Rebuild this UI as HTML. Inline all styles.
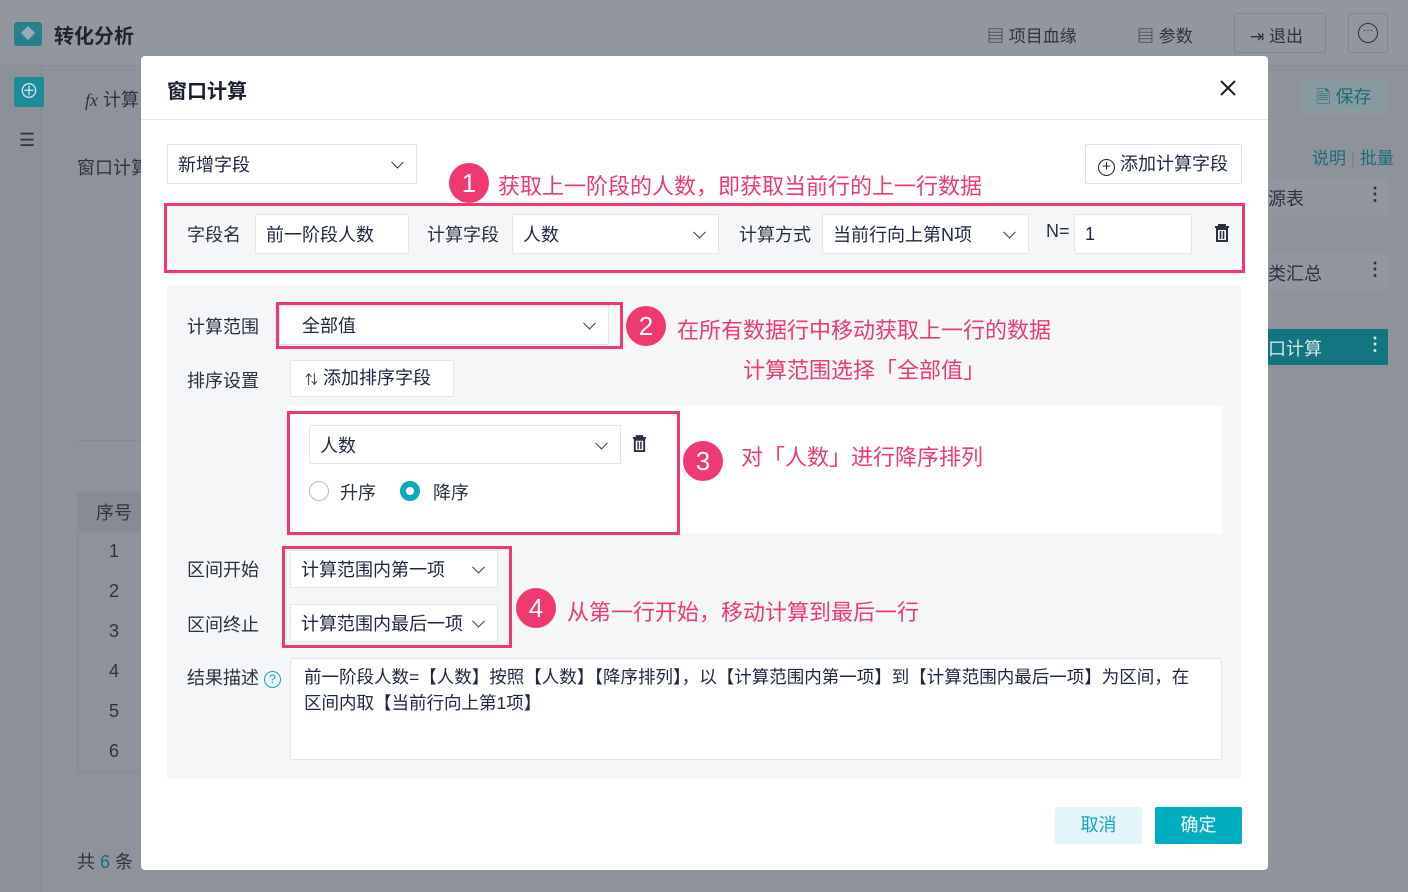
<!DOCTYPE html>
<html><head><meta charset="utf-8"><style>
*{box-sizing:border-box;margin:0;padding:0}
body{width:1408px;height:892px;overflow:hidden;position:relative;background:#8e939b;font-family:"Liberation Sans","Noto Sans CJK SC",sans-serif;color:#1f2640;font-size:18px}
.a{position:absolute;white-space:nowrap}
.bg{color:#2e3340}
.box{position:absolute;background:#fff;border:1px solid #dcdfe6;border-radius:2px}
.sel{position:absolute;background:#fff;border:1px solid #e1e4ea;border-radius:2px;padding-left:10px;display:flex;align-items:center;font-size:18px}
.sel .ch{position:absolute;right:14px;top:50%;width:9px;height:9px;border-right:1.6px solid #3a4050;border-bottom:1.6px solid #3a4050;transform:translateY(-70%) rotate(45deg)}
.red{position:absolute;border:3px solid #ee3a6f}
.num{position:absolute;width:40px;height:40px;border-radius:50%;background:#ee3a6f;color:#fff;font-size:26px;text-align:center;line-height:40px}
.ann{position:absolute;color:#ee3a6f;font-size:22px;white-space:nowrap}
.lbl{position:absolute;font-size:18px;color:#2a3040;white-space:nowrap}
</style></head><body>
<div class="a" style="left:0;top:0;width:1408px;height:66px;background:#92969e;border-bottom:1px solid #868a92"></div>
<div class="a" style="left:14px;top:22px;width:28px;height:24px;background:#2a7f8c;border-radius:3px"></div>
<div class="a" style="left:23px;top:28px;width:10px;height:10px;background:#9ab;transform:rotate(45deg)"></div>
<div class="a" style="left:54px;top:20px;font-size:20px;font-weight:bold;color:#1f2430">转化分析</div>
<div class="a bg" style="left:987px;top:22px;font-size:17px">▤ 项目血缘</div>
<div class="a bg" style="left:1137px;top:22px;font-size:17px">▤ 参数</div>
<div class="a" style="left:1234px;top:13px;width:92px;height:40px;border:1px solid #808590;border-radius:3px"></div>
<div class="a bg" style="left:1250px;top:22px;font-size:17px">⇥ 退出</div>
<div class="a" style="left:1348px;top:13px;width:40px;height:40px;border:1px solid #808590;border-radius:3px"></div>
<div class="a" style="left:1358px;top:23px;width:20px;height:20px;border:1.5px solid #2e3340;border-radius:50%;font-size:10px;text-align:center;line-height:14px">···</div>
<div class="a" style="left:0;top:67px;width:42px;height:825px;background:#8c9199;border-right:1px solid #858a92"></div>
<div class="a" style="left:14px;top:77px;width:30px;height:30px;background:#1e8c98;border-radius:2px;color:#cde;text-align:center;line-height:30px;font-size:20px">⊕</div>
<div class="a bg" style="left:19px;top:130px;font-size:18px">☰</div>
<div class="a bg" style="left:85px;top:86px;font-size:18px"><i style="font-family:'Liberation Serif',serif">fx</i> 计算</div>
<div class="a bg" style="left:77px;top:154px;font-size:18px">窗口计算</div>
<div class="a" style="left:77px;top:440px;width:70px;height:1px;background:#858a92"></div>
<div class="a" style="left:77px;top:492px;width:70px;height:280px;border:1px solid #848890"></div>
<div class="a" style="left:77px;top:492px;width:70px;height:40px;background:#878c94"></div>
<div class="a bg" style="left:96px;top:499px;font-size:18px">序号</div>
<div class="a bg" style="left:109px;top:531px;font-size:18px;line-height:40px">1<br>2<br>3<br>4<br>5<br>6</div>
<div class="a bg" style="left:77px;top:848px;font-size:18px">共 <span style="color:#1b6d78">6</span> 条</div>
<div class="a" style="left:1302px;top:80px;width:86px;height:34px;background:#869aa0;border-radius:3px;color:#1b6d78;font-size:18px;line-height:34px;padding-left:14px">🗎 保存</div>
<div class="a" style="left:1312px;top:144px;color:#1b6d78;font-size:17px">说明 <span style="color:#7a8088">|</span> 批量</div>
<div class="a" style="left:1268px;top:178px;width:120px;height:38px;background:#92969e"></div>
<div class="a bg" style="left:1268px;top:185px">源表</div><div class="a bg" style="left:1366px;top:184px;font-weight:bold">⋮</div>
<div class="a" style="left:1268px;top:253px;width:120px;height:38px;background:#92969e"></div>
<div class="a bg" style="left:1268px;top:260px">类汇总</div><div class="a bg" style="left:1366px;top:259px;font-weight:bold">⋮</div>
<div class="a" style="left:1268px;top:329px;width:120px;height:36px;background:#137580"></div>
<div class="a" style="left:1268px;top:335px;color:#d8e4e6">口计算</div><div class="a" style="left:1366px;top:334px;font-weight:bold;color:#d8e4e6">⋮</div>

<div class="a" style="left:141px;top:56px;width:1127px;height:814px;background:#fff;border-radius:4px"></div>
<div class="a" style="left:167px;top:75px;font-size:20px;font-weight:bold;color:#1a1f30">窗口计算</div>
<svg class="a" style="left:1219px;top:79px" width="18" height="18" viewBox="0 0 18 18"><path d="M2 2L16 16M16 2L2 16" stroke="#222" stroke-width="2"/></svg>
<div class="a" style="left:141px;top:119px;width:1127px;height:1px;background:#e6e8ec"></div>

<div class="sel" style="left:167px;top:144px;width:250px;height:40px">新增字段<span class="ch"></span></div>
<div class="box" style="left:1085px;top:144px;width:157px;height:40px;font-size:18px;line-height:38px;padding-left:12px"><span style="display:inline-block;width:17px;height:17px;border:1.6px solid #222;border-radius:50%;text-align:center;line-height:13px;font-size:15px;vertical-align:-1px">+</span> 添加计算字段</div>

<div class="num" style="left:449px;top:163px">1</div>
<div class="ann" style="left:498px;top:169px">获取上一阶段的人数，即获取当前行的上一行数据</div>

<div class="a" style="left:167px;top:206px;width:1074px;height:59px;background:#f5f6f8"></div>
<div class="red" style="left:164px;top:203px;width:1081px;height:70px"></div>
<div class="lbl" style="left:187px;top:221px">字段名</div>
<div class="sel" style="left:255px;top:214px;width:154px;height:40px">前一阶段人数</div>
<div class="lbl" style="left:427px;top:221px">计算字段</div>
<div class="sel" style="left:512px;top:214px;width:207px;height:40px">人数<span class="ch"></span></div>
<div class="lbl" style="left:739px;top:221px">计算方式</div>
<div class="sel" style="left:822px;top:214px;width:207px;height:40px">当前行向上第N项<span class="ch"></span></div>
<div class="lbl" style="left:1046px;top:221px">N=</div>
<div class="sel" style="left:1074px;top:214px;width:118px;height:40px">1</div>
<svg class="a" style="left:1214px;top:224px" width="16" height="18" viewBox="0 0 16 18"><path d="M1 3H15M5 3V1H11V3M3 5H13V17H3Z" fill="none" stroke="#2a3040" stroke-width="2"/><path d="M6.5 7V15M9.5 7V15" stroke="#2a3040" stroke-width="1.6"/></svg>

<div class="a" style="left:167px;top:286px;width:1074px;height:492px;background:#f5f6f8"></div>
<div class="lbl" style="left:187px;top:313px">计算范围</div>
<div class="sel" style="left:279px;top:305px;width:330px;height:40px;padding-left:22px">全部值<span class="ch"></span></div>
<div class="red" style="left:276px;top:302px;width:347px;height:47px"></div>
<div class="num" style="left:626px;top:306px">2</div>
<div class="ann" style="left:677px;top:313px">在所有数据行中移动获取上一行的数据</div>
<div class="ann" style="left:743px;top:353px">计算范围选择「全部值」</div>

<div class="lbl" style="left:187px;top:367px">排序设置</div>
<div class="box" style="left:290px;top:360px;width:164px;height:37px;border-color:#e1e4ea;font-size:18px;line-height:35px;padding-left:14px"><span style="font-size:13px">⇅</span> 添加排序字段</div>

<div class="a" style="left:287px;top:406px;width:935px;height:128px;background:#fff"></div>
<div class="red" style="left:287px;top:411px;width:393px;height:124px"></div>
<div class="sel" style="left:309px;top:425px;width:312px;height:39px">人数<span class="ch"></span></div>
<svg class="a" style="left:632px;top:435px" width="15" height="17" viewBox="0 0 16 18"><path d="M1 3H15M5 3V1H11V3M3 5H13V17H3Z" fill="none" stroke="#2a3040" stroke-width="2"/><path d="M6.5 7V15M9.5 7V15" stroke="#2a3040" stroke-width="1.6"/></svg>
<div class="a" style="left:309px;top:481px;width:20px;height:20px;border:1.5px solid #b8bcc4;border-radius:50%"></div>
<div class="lbl" style="left:340px;top:479px">升序</div>
<div class="a" style="left:400px;top:481px;width:20px;height:20px;border:6px solid #0eaabb;border-radius:50%;background:#fff"></div>
<div class="lbl" style="left:433px;top:479px">降序</div>
<div class="num" style="left:683px;top:441px">3</div>
<div class="ann" style="left:741px;top:440px">对「人数」进行降序排列</div>

<div class="lbl" style="left:187px;top:556px">区间开始</div>
<div class="sel" style="left:290px;top:550px;width:208px;height:38px">计算范围内第一项<span class="ch"></span></div>
<div class="lbl" style="left:187px;top:611px">区间终止</div>
<div class="sel" style="left:290px;top:604px;width:208px;height:38px">计算范围内最后一项<span class="ch"></span></div>
<div class="red" style="left:282px;top:546px;width:230px;height:102px"></div>
<div class="num" style="left:516px;top:588px">4</div>
<div class="ann" style="left:567px;top:595px">从第一行开始，移动计算到最后一行</div>

<div class="lbl" style="left:187px;top:664px">结果描述 <span style="display:inline-block;width:17px;height:17px;border:1.3px solid #0eaabb;border-radius:50%;color:#0eaabb;font-size:12px;text-align:center;line-height:15px;vertical-align:1px">?</span></div>
<div class="box" style="left:290px;top:658px;width:932px;height:102px;border-color:#e1e4ea;padding:5px 13px;font-size:17.5px;line-height:26px;white-space:normal">前一阶段人数=【人数】按照【人数】【降序排列】，以【计算范围内第一项】到【计算范围内最后一项】为区间，在<br>区间内取【当前行向上第1项】</div>

<div class="a" style="left:1055px;top:807px;width:87px;height:37px;background:#e2f5f8;border-radius:2px;color:#0eaabb;font-size:18px;text-align:center;line-height:37px">取消</div>
<div class="a" style="left:1155px;top:807px;width:87px;height:37px;background:#00aec0;border-radius:2px;color:#fff;font-size:18px;text-align:center;line-height:37px">确定</div>
</body></html>
